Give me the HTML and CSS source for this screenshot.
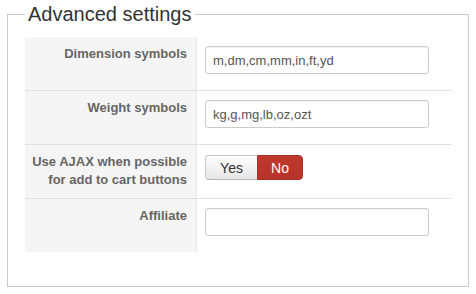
FILE: index.html
```html
<!DOCTYPE html>
<html>
<head>
<meta charset="utf-8">
<link rel="stylesheet" href="styles.css">
</head>
<body>
<fieldset class="panel">
  <legend class="panel-title">Advanced settings</legend>
  <div class="form-table">
    <div class="row">
      <div class="label">Dimension symbols</div>
      <div class="field"><input class="text" type="text" value="m,dm,cm,mm,in,ft,yd"></div>
    </div>
    <div class="row">
      <div class="label">Weight symbols</div>
      <div class="field"><input class="text" type="text" value="kg,g,mg,lb,oz,ozt"></div>
    </div>
    <div class="row">
      <div class="label">Use AJAX when possible<br>for add to cart buttons</div>
      <div class="field">
        <div class="toggle">
          <span class="opt opt-yes">Yes</span><span class="opt opt-no">No</span>
        </div>
      </div>
    </div>
    <div class="row last">
      <div class="label">Affiliate</div>
      <div class="field"><input class="text" type="text" value=""></div>
    </div>
  </div>
</fieldset>
</body>
</html>
```
FILE: styles.css
```css
html, body {
  margin: 0;
  padding: 0;
  background: #fff;
  font-family: "Liberation Sans", Arial, sans-serif;
}
body {
  padding-top: 3px;
}
.panel {
  margin: 0 7px;
  padding: 12px 17px 34px 17px;
  border: 1px solid #cccccc;
  min-width: 0;
}
.panel-title {
  padding: 0 3px;
  font-size: 20px;
  line-height: 22px;
  color: #333;
}
.form-table {
  display: flex;
  flex-direction: column;
}
.row {
  display: flex;
  height: 54px;
  border-bottom: 1px solid #e0e0e0;
  box-sizing: border-box;
}
.row.last {
  border-bottom: none;
  height: 53px;
}
.label {
  width: 172px;
  flex: none;
  background: #f5f5f5;
  border-right: 1px solid #e8e8e8;
  text-align: right;
  box-sizing: border-box;
  padding: 8px 9px 0 0;
  font-size: 13px;
  line-height: 18px;
  font-weight: bold;
  color: #666;
}
.field {
  flex: 1;
  padding: 9px 0 0 8px;
}
.text {
  box-sizing: border-box;
  width: 224px;
  height: 28px;
  margin: 0;
  padding: 0 7px;
  border: 1px solid #cccccc;
  border-radius: 3px;
  font-family: "Liberation Sans", Arial, sans-serif;
  font-size: 13px;
  color: #555;
  background: #fff;
  box-shadow: inset 0 1px 1px rgba(0,0,0,0.05);
  outline: none;
}
.toggle {
  display: inline-flex;
  height: 25px;
  margin-top: 1px;
}
.opt {
  display: flex;
  align-items: center;
  justify-content: center;
  box-sizing: border-box;
  font-size: 14px;
}
.opt-yes {
  width: 52px;
  color: #333;
  background: linear-gradient(#ffffff, #e6e6e6);
  border: 1px solid #c8c8c8;
  border-bottom-color: #b3b3b3;
  border-right: none;
  border-radius: 4px 0 0 4px;
}
.opt-no {
  width: 46px;
  color: #fff;
  background: linear-gradient(#c0392f, #b8322a);
  border: 1px solid #a8302a;
  border-radius: 0 4px 4px 0;
}
```
